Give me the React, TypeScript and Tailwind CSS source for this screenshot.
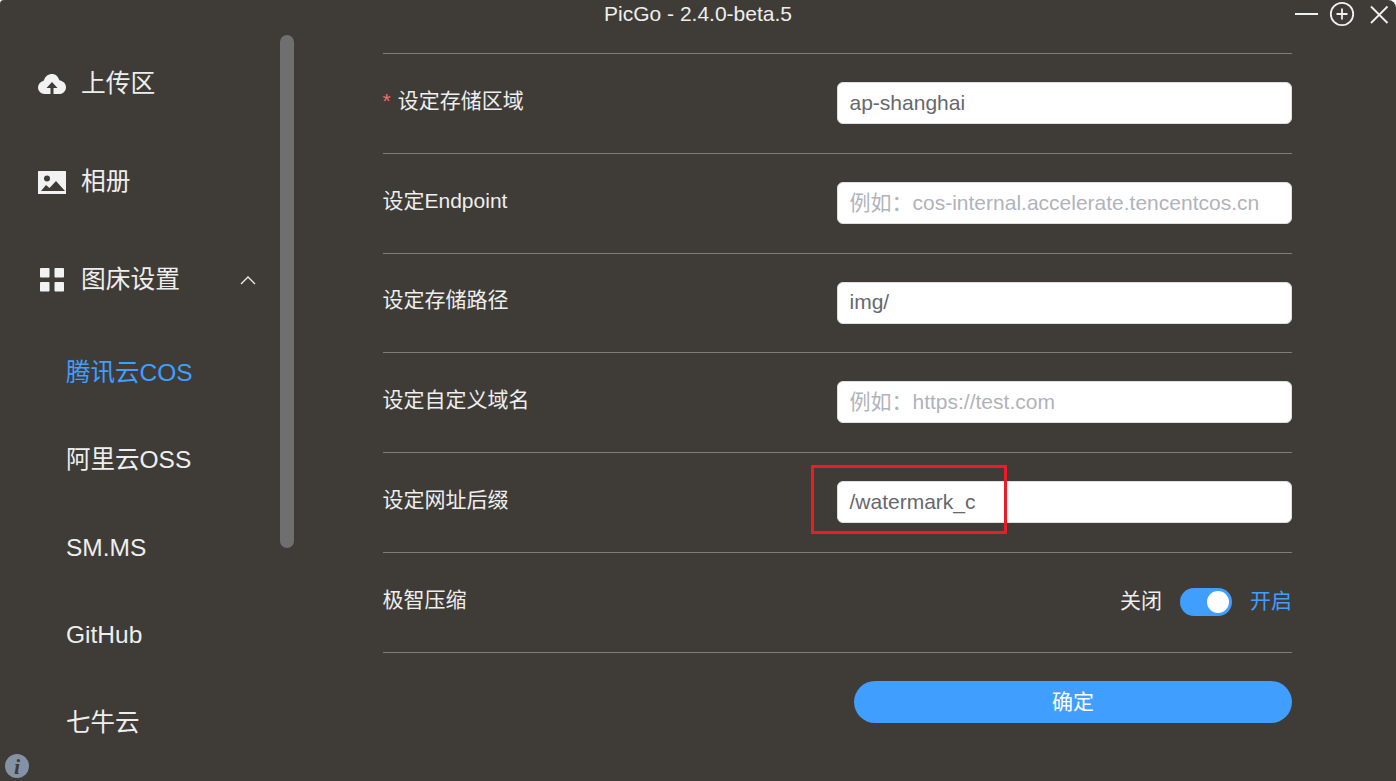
import { ReactNode } from "react"

const FONT = "font-['Liberation_Sans','Noto_Sans_CJK_SC',sans-serif]"

const subItems = ["腾讯云COS", "阿里云OSS", "SM.MS", "GitHub", "七牛云"]

function CloudIcon() {
  return (
    <svg width="28" height="20" viewBox="0 0 28 20" className="shrink-0">
      <path
        fill="#f2f2f2"
        fillRule="evenodd"
        d="M14 0c3.300 0 6 2.200 6.900 5.300.2.700.5 1 1.100 1.200 3.400.8 6 3.200 6 6.700 0 3.900-3 6.800-6.800 6.800H15.500v-6h4L14 8l-5.500 6h4v6H6.500C2.900 20 0 17.200 0 13.600c0-3.100 2-5.700 5-6.700.7-.2 1-.5 1.200-1.100C7.200 2.400 10.300 0 14 0z"
      />
    </svg>
  )
}

function ImageIcon() {
  return (
    <svg width="28" height="23" viewBox="0 0 28 23" className="shrink-0">
      <path
        fill="#f2f2f2"
        fillRule="evenodd"
        d="M.5 0h27a.5.5 0 0 1 .5.5v22a.5.5 0 0 1-.5.5H.5a.5.5 0 0 1-.5-.5V.5A.5.5 0 0 1 .5 0zM9 4.500a3 3 0 1 0 0 6 3 3 0 0 0 0-6zM3 20h24l-9-10-6.500 7-3.500-3z"
      />
    </svg>
  )
}

function GridIcon() {
  return (
    <svg width="24" height="24" viewBox="0 0 24 24" className="ml-[2px] shrink-0">
      <rect x="0" y="0" width="9.500" height="9.500" rx="0.800" fill="#f2f2f2" />
      <rect x="14.500" y="0" width="9.500" height="9.500" rx="0.800" fill="#f2f2f2" />
      <rect x="0" y="14" width="9.500" height="9.500" rx="0.800" fill="#f2f2f2" />
      <rect x="14.500" y="14" width="9.500" height="9.500" rx="0.800" fill="#f2f2f2" />
    </svg>
  )
}

function MenuRow({ icon, label, extra }: { icon: ReactNode; label: string; extra?: ReactNode }) {
  return (
    <div className="flex h-[98px] items-center pl-[38px] pr-[40px] text-[24.75px] text-[#eeeeee]">
      <span className="flex w-[43px] justify-start">{icon}</span>
      <span>{label}</span>
      {extra}
    </div>
  )
}

function FormRow({ label, required, children }: { label: string; required?: boolean; children: ReactNode }) {
  return (
    <div className="flex h-[99.750px] items-center justify-between border-b border-[#7f7c78] pb-[0.500px]">
      <label className="-ml-[0.500px] pb-[5px] text-[21px] text-[#eeeeee]">
        {required && <span className="mr-[7px] text-[#f56c6c]">*</span>}
        {label}
      </label>
      {children}
    </div>
  )
}

function TextInput({ value, placeholder }: { value?: string; placeholder?: string }) {
  return (
    <div className="flex h-[42px] w-[455px] items-center rounded-[6px] border-[1.500px] border-[#dcdfe6] bg-white px-[11.500px] pb-[1px] text-[21px]">
      {value ? <span className="text-[#66686d]">{value}</span> : <span className="text-[#b0b3ba]">{placeholder}</span>}
    </div>
  )
}

export default function App() {
  return (
    <div className={`relative flex h-[781px] w-[1396px] flex-col overflow-hidden rounded-tl-[4px] rounded-tr-[8px] bg-[#3f3c37] ${FONT}`}>
      <div className="relative flex h-[30px] shrink-0 items-center justify-center pb-[2px] text-[21px] text-[#eeeeee]">
        PicGo - 2.4.0-beta.5
        <div className="absolute right-0 top-0 flex items-center">
          <svg width="126" height="28" viewBox="0 0 126 28" fill="none" stroke="#f0f0f0">
            <path d="M25 14h23" strokeWidth="2" />
            <circle cx="72" cy="14" r="11.200" strokeWidth="1.800" />
            <path d="M66.500 14h11M72 8.500v11" strokeWidth="1.800" />
            <path d="M101 6.500l16.500 16.500M117.500 6.500L101 23" strokeWidth="1.800" />
          </svg>
        </div>
      </div>

      <div className="flex min-h-0 flex-1">
        <aside className="relative w-[296px] shrink-0 overflow-hidden">
          <div className="pt-[5px]">
            <MenuRow icon={<CloudIcon />} label="上传区" />
            <MenuRow icon={<ImageIcon />} label="相册" />
            <MenuRow
              icon={<GridIcon />}
              label="图床设置"
              extra={
                <svg width="16" height="10" viewBox="0 0 16 10" fill="none" stroke="#eeeeee" strokeWidth="1.300" className="ml-auto">
                  <path d="M1 9l7-7 7 7" />
                </svg>
              }
            />
            <div className="mt-[0.500px]">
              {subItems.map((item, i) => (
                <div
                  key={item}
                  className={`flex h-[87.500px] items-center pl-[66px] text-[24.5px] ${i === 0 ? "text-[#409eff]" : "text-[#eeeeee]"}`}
                >
                  {item}
                </div>
              ))}
            </div>
          </div>
          <div className="absolute left-[280px] top-[5px] h-[513px] w-[14px] rounded-[7px] bg-[#6f6f6f]" />
          <div className="absolute left-[5px] top-[724px] flex h-[24px] w-[24px] items-center justify-center rounded-full bg-[#8492a6] font-['Liberation_Serif',serif] text-[22px] font-bold italic text-[#3f3c37]">
            i
          </div>
        </aside>

        <main className="ml-[87px] w-[909px]">
          <div className="-mt-[7px] h-[31px] border-b border-[#7f7c78]" />
          <FormRow label="设定存储区域" required>
            <TextInput value="ap-shanghai" />
          </FormRow>
          <FormRow label="设定Endpoint">
            <TextInput placeholder="例如：cos-internal.accelerate.tencentcos.cn" />
          </FormRow>
          <FormRow label="设定存储路径">
            <TextInput value="img/" />
          </FormRow>
          <FormRow label="设定自定义域名">
            <TextInput placeholder="例如：https://test.com" />
          </FormRow>
          <FormRow label="设定网址后缀">
            <TextInput value="/watermark_c" />
          </FormRow>
          <FormRow label="极智压缩">
            <div className="flex items-center pb-[2px] text-[21px]">
              <span className="text-[#eeeeee]">关闭</span>
              <span className="mx-[18px] mt-[2px] flex h-[28px] w-[52px] items-center justify-end rounded-full bg-[#409eff] pr-[3px]">
                <span className="h-[22px] w-[22px] rounded-full bg-white" />
              </span>
              <span className="text-[#409eff]">开启</span>
            </div>
          </FormRow>
          <div className="mt-[28.500px] flex justify-end">
            <button className="h-[42px] w-[438px] rounded-full bg-[#409eff] text-[21px] text-white">确定</button>
          </div>
        </main>
      </div>

      {/* annotation box drawn over the screenshot */}
      <div className="absolute left-[811px] top-[465px] h-[69px] w-[196px] border-[3px] border-[#ed1c24]" />
    </div>
  )
}
